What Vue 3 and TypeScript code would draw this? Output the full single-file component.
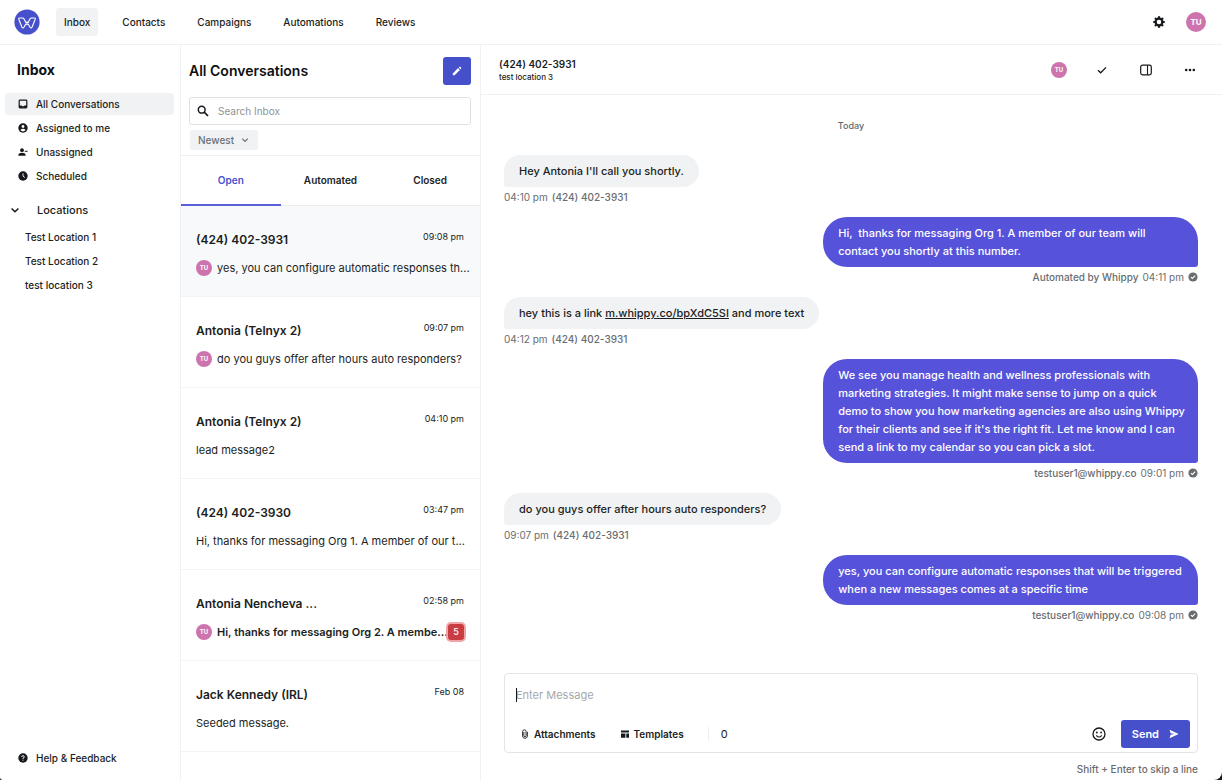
<script setup lang="ts">
import { ref } from 'vue'

interface Conversation {
  name: string
  time: string
  preview: string
  avatar?: boolean
  unread?: number
}

interface Message {
  outgoing: boolean
  text: string
  link?: string
  after?: string
  author: string
  time: string
}

const navItems = ['Inbox', 'Contacts', 'Campaigns', 'Automations', 'Reviews']
const folders = [
  { label: 'All Conversations', icon: 'inbox' },
  { label: 'Assigned to me', icon: 'user' },
  { label: 'Unassigned', icon: 'unassigned' },
  { label: 'Scheduled', icon: 'clock' },
]
const locations = ['Test Location 1', 'Test Location 2', 'test location 3']
const tabs = ['Open', 'Automated', 'Closed']

const conversations: Conversation[] = [
  { name: '(424) 402-3931', time: '09:08 pm', preview: 'yes, you can configure automatic responses th...', avatar: true },
  { name: 'Antonia (Telnyx 2)', time: '09:07 pm', preview: 'do you guys offer after hours auto responders?', avatar: true },
  { name: 'Antonia (Telnyx 2)', time: '04:10 pm', preview: 'lead message2' },
  { name: '(424) 402-3930', time: '03:47 pm', preview: 'Hi, thanks for messaging Org 1. A member of our t...' },
  { name: 'Antonia Nencheva ...', time: '02:58 pm', preview: 'Hi, thanks for messaging Org 2. A membe...', avatar: true, unread: 5 },
  { name: 'Jack Kennedy (IRL)', time: 'Feb 08', preview: 'Seeded message.' },
]

const messages: Message[] = [
  { outgoing: false, text: "Hey Antonia I'll call you shortly.", author: '(424) 402-3931', time: '04:10 pm' },
  { outgoing: true, text: 'Hi,  thanks for messaging Org 1. A member of our team will contact you shortly at this number.', author: 'Automated by Whippy', time: '04:11 pm' },
  { outgoing: false, text: 'hey this is a link ', link: 'm.whippy.co/bpXdC5SI', after: ' and more text', author: '(424) 402-3931', time: '04:12 pm' },
  { outgoing: true, text: "We see you manage health and wellness professionals with marketing strategies. It might make sense to jump on a quick demo to show you how marketing agencies are also using Whippy for their clients and see if it's the right fit. Let me know and I can send a link to my calendar so you can pick a slot.", author: 'testuser1@whippy.co', time: '09:01 pm' },
  { outgoing: false, text: 'do you guys offer after hours auto responders?', author: '(424) 402-3931', time: '09:07 pm' },
  { outgoing: true, text: 'yes, you can configure automatic responses that will be triggered when a new messages comes at a specific time', author: 'testuser1@whippy.co', time: '09:08 pm' },
]

const search = ref('')
const sort = ref('Newest')
const draft = ref('')
const activeTab = ref('Open')
const selected = ref(0)
</script>

<template>
  <div class="app">
    <header class="topbar">
      <a class="logo" href="#" aria-label="Whippy">
        <svg viewBox="0 0 26 26" width="26" height="26">
          <circle cx="13" cy="13" r="12.6" fill="#4650cb" />
          <path d="M5.6 9H8.6Q9.5 9 9.9 9.8L13 15.8L16.1 9.8Q16.5 9 17.4 9H20.4Q21.6 9 21.2 10.2L18.1 18Q17.1 20 15.9 18L13 12.8L10.1 18Q8.9 20 7.9 18L4.8 10.2Q4.4 9 5.6 9Z" fill="none" stroke="#fff" stroke-width="1.1" stroke-linejoin="round" />
        </svg>
      </a>
      <nav class="nav">
        <a v-for="(item, i) in navItems" :key="item" href="#" :class="{ active: i === 0 }">{{ item }}</a>
      </nav>
      <button class="icon-button" aria-label="Settings">
        <svg viewBox="0 0 12 12" width="12" height="12">
          <circle cx="6" cy="6" r="3.4" fill="none" stroke="#15181c" stroke-width="2.2" />
          <path d="M6 .3V2M6 10V11.7M.3 6H2M10 6H11.7M2 2L3.2 3.2M8.8 8.8L10 10M10 2L8.8 3.2M3.2 8.8L2 10" stroke="#15181c" stroke-width="2.2" />
        </svg>
      </button>
      <span class="avatar large">TU</span>
    </header>

    <div class="columns">
      <aside class="sidebar">
        <h1>Inbox</h1>
        <nav class="folders">
          <a v-for="(f, i) in folders" :key="f.label" href="#" class="folder" :class="{ active: i === 0 }">
            <svg viewBox="0 0 10 10" width="10" height="10">
              <template v-if="f.icon === 'inbox'">
                <rect x="1.2" y="1.2" width="7.6" height="7.6" rx="0.8" fill="none" stroke="#15181c" stroke-width="1.2" />
                <path d="M1.2 6.6H3.4Q5 8.2 6.6 6.6H8.8V8.8H1.2Z" fill="#15181c" />
              </template>
              <template v-else-if="f.icon === 'user'">
                <circle cx="5" cy="5" r="4.7" fill="#15181c" />
                <circle cx="5" cy="3.5" r="1.4" fill="#fff" />
                <path d="M2.3 7.1Q5 4.6 7.7 7.1Q5 9.7 2.3 7.1Z" fill="#fff" />
              </template>
              <template v-else-if="f.icon === 'unassigned'">
                <circle cx="4" cy="3.2" r="1.9" fill="#15181c" />
                <path d="M.4 8.7V7.8Q.8 5.8 4 5.8T7.6 7.8V8.7Z" fill="#15181c" />
                <path d="M6.8 4.3H9.6" stroke="#15181c" stroke-width="1" />
              </template>
              <template v-else>
                <circle cx="5" cy="5" r="4.7" fill="#15181c" />
                <path d="M5 2.4V5.1L6.8 6.5" fill="none" stroke="#fff" stroke-width="0.9" />
              </template>
            </svg>
            {{ f.label }}
          </a>
        </nav>
        <button class="locations-toggle">
          <svg viewBox="0 0 10 10" width="10" height="10"><path d="M1.6 3.4L5 6.8L8.4 3.4" fill="none" stroke="#15181c" stroke-width="1.4" /></svg>
          Locations
        </button>
        <nav class="locations">
          <a v-for="l in locations" :key="l" href="#">{{ l }}</a>
        </nav>
        <a class="folder help" href="#">
          <svg viewBox="0 0 10 10" width="10" height="10">
            <circle cx="5" cy="5" r="4.7" fill="#15181c" />
            <path d="M3.6 4Q3.7 2.7 5 2.7T6.3 4Q6.2 4.8 5 5.2V6M5 6.7V7.6" fill="none" stroke="#fff" stroke-width="0.9" />
          </svg>
          Help &amp; Feedback
        </a>
      </aside>

      <section class="list">
        <div class="list-head">
          <div class="list-title">
            <h2>All Conversations</h2>
            <button class="compose" aria-label="New conversation">
              <svg viewBox="0 0 10 10" width="10" height="10"><path d="M.8 9.2V7.4L6.1 2.1L7.9 3.9L2.6 9.2ZM6.8 1.4L7.4.8Q7.8.5 8.2.8L9.2 1.8Q9.5 2.2 9.2 2.6L8.6 3.2Z" fill="#fff" /></svg>
            </button>
          </div>
          <label class="search">
            <svg viewBox="0 0 12 12" width="12" height="12">
              <circle cx="4.7" cy="4.7" r="3.4" fill="none" stroke="#15181c" stroke-width="1.5" />
              <path d="M7.2 7.2L11 11" stroke="#15181c" stroke-width="1.7" />
            </svg>
            <input v-model="search" type="search" placeholder="Search Inbox" aria-label="Search Inbox" />
          </label>
          <label class="sort">
            <select v-model="sort" aria-label="Sort conversations">
              <option>Newest</option>
              <option>Oldest</option>
            </select>
            <svg viewBox="0 0 8 8" width="8" height="8"><path d="M1.2 2.6L4 5.4L6.8 2.6" fill="none" stroke="#6b7075" stroke-width="1.2" /></svg>
          </label>
        </div>
        <div class="tabs" role="tablist">
          <button v-for="t in tabs" :key="t" role="tab" :aria-selected="activeTab === t" :class="{ active: activeTab === t }" @click="activeTab = t">{{ t }}</button>
        </div>
        <div class="conversations">
          <button v-for="(c, i) in conversations" :key="i" class="conversation" :class="{ selected: selected === i, unread: c.unread }" @click="selected = i">
            <span class="row">
              <span class="name">{{ c.name }}</span>
              <span class="time">{{ c.time }}</span>
            </span>
            <span class="row preview-row">
              <span v-if="c.avatar" class="avatar">TU</span>
              <span class="preview">{{ c.preview }}</span>
              <span v-if="c.unread" class="badge">{{ c.unread }}</span>
            </span>
          </button>
        </div>
      </section>

      <main class="chat">
        <header class="chat-head">
          <div class="contact">
            <h3>(424) 402-3931</h3>
            <p>test location 3</p>
          </div>
          <div class="actions">
            <span class="avatar">TU</span>
            <button class="icon-button" aria-label="Close conversation">
              <svg viewBox="0 0 12 12" width="12" height="12"><path d="M2 6.3L4.7 8.8L10 3.4" fill="none" stroke="#15181c" stroke-width="1.3" /></svg>
            </button>
            <button class="icon-button" aria-label="Toggle details">
              <svg viewBox="0 0 12 12" width="12" height="12">
                <rect x="0.7" y="1.2" width="10.6" height="9.6" rx="1.8" fill="none" stroke="#15181c" stroke-width="1.2" />
                <path d="M7.5 1.2V10.8" stroke="#15181c" stroke-width="1.1" />
              </svg>
            </button>
            <button class="icon-button" aria-label="More">
              <svg viewBox="0 0 12 12" width="12" height="12" fill="#15181c"><circle cx="2.2" cy="6" r="1.3" /><circle cx="6" cy="6" r="1.3" /><circle cx="9.8" cy="6" r="1.3" /></svg>
            </button>
          </div>
        </header>

        <div class="thread">
          <p class="day">Today</p>
          <article v-for="(m, i) in messages" :key="i" class="message" :class="{ outgoing: m.outgoing }">
            <p class="bubble">{{ m.text }}<a v-if="m.link" href="#">{{ m.link }}</a>{{ m.after }}</p>
            <p class="meta">
              <template v-if="m.outgoing">
                <span class="author">{{ m.author }}</span>
                <span>{{ m.time }}</span>
                <svg viewBox="0 0 10 10" width="10" height="10">
                  <circle cx="5" cy="5" r="4.6" fill="#6a6d70" />
                  <path d="M2.9 5.1L4.4 6.5L7.2 3.7" fill="none" stroke="#fff" stroke-width="1.1" />
                </svg>
              </template>
              <template v-else>
                <span>{{ m.time }}</span>
                <span class="author">{{ m.author }}</span>
              </template>
            </p>
          </article>
        </div>

        <footer class="composer-area">
          <form class="composer" @submit.prevent>
            <div class="entry">
              <textarea v-model="draft" rows="1" placeholder="Enter Message" aria-label="Message"></textarea>
            </div>
            <div class="tools">
              <button type="button" class="tool">
                <svg viewBox="0 0 10 10" width="10" height="10"><path d="M7.4 2.8V7Q7.2 9.3 5 9.3T2.6 7V2.6Q2.8.8 4.4.8T6.1 2.6V6.6Q6 7.7 5 7.7T3.9 6.6V3" fill="none" stroke="#15181c" stroke-width="0.9" /></svg>
                Attachments
              </button>
              <button type="button" class="tool templates">
                <svg viewBox="0 0 10 10" width="10" height="10" fill="#15181c"><path d="M1 1.4H9V3.6H1ZM1 4.4H5.4V8.8H1ZM6.3 4.4H9V8.8H6.3Z" /></svg>
                Templates
              </button>
              <span class="count">0</span>
              <button type="button" class="icon-button emoji" aria-label="Emoji">
                <svg viewBox="0 0 14 14" width="14" height="14">
                  <circle cx="7" cy="7" r="6" fill="none" stroke="#15181c" stroke-width="1.3" />
                  <circle cx="4.9" cy="5.5" r="0.9" fill="#15181c" /><circle cx="9.1" cy="5.5" r="0.9" fill="#15181c" />
                  <path d="M4.2 8.3Q7 11.8 9.8 8.3" fill="none" stroke="#15181c" stroke-width="1.1" />
                </svg>
              </button>
              <button type="submit" class="send">
                Send
                <svg viewBox="0 0 10 10" width="10" height="10"><path d="M.6.8L9.6 5L.6 9.2L1.6 5.7L5.4 5L1.6 4.3Z" fill="#fff" /></svg>
              </button>
            </div>
          </form>
          <p class="hint">Shift + Enter to skip a line</p>
        </footer>
      </main>
    </div>
  </div>
</template>

<style>
body {
  background: #16181a;
}
</style>

<style scoped>
.app,
.app * {
  box-sizing: border-box;
}
.app {
  display: flex;
  flex-direction: column;
  height: 100vh;
  overflow: hidden;
  border-radius: 0 0 8px 3px;
  background: #fff;
  color: #1b1e22;
  font-family: Inter, "Liberation Sans", sans-serif;
  font-size: 11px;
  line-height: 18px;
}
h1, h2, h3, p {
  margin: 0;
}
a {
  color: inherit;
  text-decoration: none;
}
button, input, select, textarea {
  font: inherit;
  color: inherit;
  border: 0;
  padding: 0;
  background: none;
}
svg {
  display: block;
  flex: none;
}
.topbar {
  display: flex;
  align-items: center;
  flex: none;
  height: 45px;
  padding: 0 16px 1px 14px;
  border-bottom: 1px solid #f0f1f2;
}
.nav {
  display: flex;
  gap: 16px;
  flex: 1;
  margin-left: 16px;
  font-size: 10px;
  font-weight: 500;
}
.nav a {
  padding: 5px 8px;
  border-radius: 3px;
}
.nav .active {
  background: #f1f2f4;
}
.icon-button {
  display: grid;
  place-items: center;
}
.avatar {
  display: grid;
  place-items: center;
  flex: none;
  width: 16px;
  height: 16px;
  border-radius: 50%;
  background: #cd74ae;
  color: #fff;
  font-size: 6px;
  font-weight: 700;
  line-height: 8px;
}
.avatar.large {
  width: 20px;
  height: 20px;
  margin-left: 21px;
  font-size: 8px;
}
.columns {
  display: flex;
  flex: 1;
  min-height: 0;
}
.sidebar {
  display: flex;
  flex-direction: column;
  flex: none;
  width: 181px;
  padding: 15px 6px 11px 5px;
  border-right: 1px solid #f0f1f2;
  font-size: 10px;
  font-weight: 500;
}
h1, h2 {
  font-size: 14px;
  line-height: 20px;
  font-weight: 700;
  color: #0d1013;
}
h2 {
  font-weight: 600;
}
h1 {
  padding-left: 12px;
}
.folders {
  display: flex;
  flex-direction: column;
  gap: 2px;
  margin-top: 13px;
}
.folder {
  display: flex;
  align-items: center;
  gap: 8px;
  height: 22px;
  padding-left: 13px;
  border-radius: 3px;
}
.folder.active {
  background: #f1f2f4;
}
.locations-toggle {
  display: flex;
  align-items: center;
  gap: 17px;
  height: 22px;
  margin-top: 12px;
  padding-left: 5px;
  font-size: 11px;
}
.locations {
  display: flex;
  flex-direction: column;
  gap: 6px;
  margin-top: 7px;
  padding-left: 20px;
}
.help {
  margin-top: auto;
}
.list {
  flex: none;
  width: 300px;
  border-right: 1px solid #f0f1f2;
  overflow: hidden;
}
.list-head {
  padding: 12px 9px 5px 8px;
  border-bottom: 1px solid #f0f1f2;
}
.list-title {
  display: flex;
  align-items: center;
  justify-content: space-between;
}
.compose {
  display: grid;
  place-items: center;
  width: 28px;
  height: 28px;
  border-radius: 3px;
  background: #4650cb;
}
.search {
  display: flex;
  align-items: center;
  gap: 9px;
  height: 28px;
  margin-top: 12px;
  padding: 0 7px;
  border: 1px solid #dfe1e4;
  border-radius: 3px;
  font-size: 10px;
}
.search input {
  flex: 1;
  min-width: 0;
  outline: none;
}
.search input::placeholder {
  color: #8f9398;
}
.sort {
  display: inline-flex;
  align-items: center;
  gap: 6px;
  height: 20px;
  margin: 5px 0 0 1px;
  padding: 0 9px 0 8px;
  border-radius: 3px;
  background: #f1f2f4;
  color: #6b7075;
  font-size: 10px;
  font-weight: 500;
  vertical-align: top;
}
.sort select {
  appearance: none;
  outline: none;
}
.tabs {
  display: grid;
  grid-template-columns: repeat(3, 1fr);
  height: 50px;
  border-bottom: 1px solid #e9ebed;
}
.tabs button {
  height: 50px;
  border-bottom: 2px solid transparent;
  font-size: 10px;
  font-weight: 600;
}
.tabs .active {
  border-color: #5a5fd8;
  color: #4650cb;
}
.conversation {
  display: flex;
  flex-direction: column;
  gap: 9px;
  width: 100%;
  height: 91px;
  padding: 24px 8px 0 15px;
  border-bottom: 1px solid #f2f3f4;
  text-align: left;
}
.conversation.selected {
  background: #f8f9fb;
}
.row {
  display: flex;
  justify-content: space-between;
  width: 100%;
}
.name {
  font-size: 12px;
  font-weight: 600;
  line-height: 20px;
}
.time {
  margin-right: 8px;
  font-size: 9px;
  line-height: 14px;
}
.preview-row {
  align-items: center;
  justify-content: flex-start;
}
.preview-row .avatar {
  margin-right: 5px;
}
.preview {
  white-space: nowrap;
}
.unread .preview {
  font-weight: 600;
}
.badge {
  display: grid;
  place-items: center;
  flex: none;
  width: 16px;
  height: 16px;
  margin: 0 8px 0 auto;
  border-radius: 3px;
  background: #c93d42;
  box-shadow: 0 0 0 2px #efa5a8;
  color: #fff;
  font-size: 9px;
  font-weight: 500;
  line-height: 12px;
}
.chat {
  display: flex;
  flex-direction: column;
  flex: 1;
  min-width: 0;
}
.chat-head {
  display: flex;
  align-items: center;
  justify-content: space-between;
  flex: none;
  height: 50px;
  padding: 0 26px 0 18px;
  border-bottom: 1px solid #f0f1f2;
}
.contact h3 {
  font-size: 10px;
  font-weight: 600;
  line-height: 14px;
}
.contact p {
  font-size: 8px;
  font-weight: 500;
  line-height: 12px;
}
.actions {
  display: flex;
  align-items: center;
  gap: 32px;
}
.actions .avatar {
  margin-right: -3px;
}
.thread {
  flex: 1;
  min-height: 0;
  padding: 23px 24px 0 23px;
}
.day {
  margin-bottom: 21px;
  font-size: 9px;
  font-weight: 500;
  line-height: 16px;
  text-align: center;
  color: #63676b;
}
.message {
  display: flex;
  flex-direction: column;
  align-items: flex-start;
  margin-bottom: 10px;
}
.message.outgoing {
  align-items: flex-end;
}
.bubble {
  max-width: 54%;
  padding: 7px 15px;
  border-radius: 20px 20px 20px 3px;
  background: #f1f2f4;
  font-weight: 500;
  white-space: pre-wrap;
}
.bubble a {
  text-decoration: underline;
}
.outgoing .bubble {
  padding-right: 11px;
  border-radius: 24px 24px 3px 24px;
  background: #5652da;
  color: #fff;
}
.meta {
  display: flex;
  align-items: center;
  gap: 4px;
  height: 20px;
  font-size: 10px;
  color: #6a6d70;
}
.author {
  font-weight: 500;
}
.composer-area {
  flex: none;
  padding: 0 24px 2px 23px;
}
.composer {
  padding: 12px 7px 4px 11px;
  border: 1px solid #e2e4e6;
  border-radius: 4px;
}
.entry {
  position: relative;
  display: flex;
}
.entry::before {
  content: "";
  position: absolute;
  left: 0;
  top: 2px;
  width: 1px;
  height: 14px;
  background: #15181c;
}
.entry textarea {
  flex: 1;
  height: 18px;
  resize: none;
  outline: none;
}
.entry textarea::placeholder {
  color: #a5a8ab;
}
.tools {
  display: flex;
  align-items: center;
  margin-top: 16px;
}
.tool {
  display: flex;
  align-items: center;
  gap: 4px;
  margin-left: 4px;
  font-size: 10px;
  font-weight: 600;
}
.templates {
  margin-left: 24px;
}
.count {
  margin: 0 auto 0 24px;
  padding-left: 12px;
  border-left: 1px solid #eceef0;
  line-height: 14px;
}
.emoji {
  margin-right: 15px;
}
.send {
  display: flex;
  align-items: center;
  gap: 10px;
  height: 28px;
  padding: 0 11px;
  border-radius: 3px;
  background: #4650cb;
  color: #fff;
  font-weight: 600;
}
.hint {
  margin-top: 7px;
  font-size: 10px;
  font-weight: 500;
  text-align: right;
  color: #6a6d70;
}
</style>
